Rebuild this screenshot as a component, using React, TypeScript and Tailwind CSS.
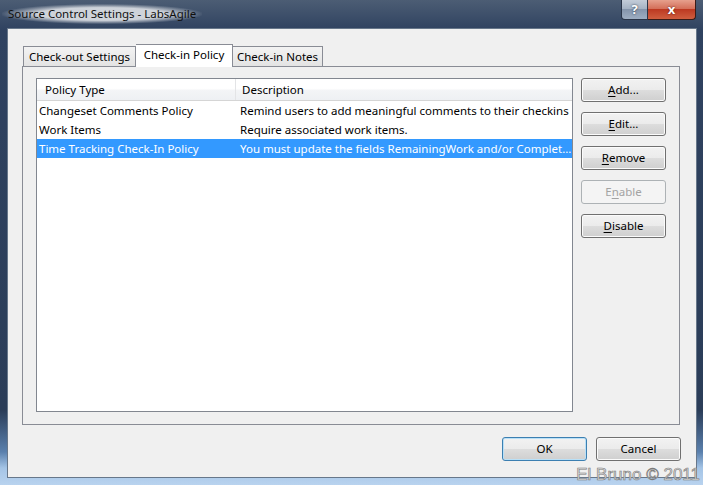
import React from "react";

const U = ({ c }: { c: string }) => <span className="underline underline-offset-2">{c}</span>;

function Btn({ children, kind = "normal" }: { children: React.ReactNode; kind?: "normal" | "default" | "disabled" }) {
  const base = "w-[85px] h-[24px] rounded-[3px] border flex items-center justify-center text-[11.5px] leading-none";
  const cls =
    kind === "disabled"
      ? "border-[#adb2b5] bg-[#f4f4f4] text-[#a3a3a3]"
      : kind === "default"
      ? "border-[#3c7fb1] text-black bg-[linear-gradient(to_bottom,#f2f2f2_0%,#ebebeb_50%,#dddddd_50%,#cfcfcf_100%)] shadow-[inset_0_0_0_1px_#b9e0f7]"
      : "border-[#707070] text-black bg-[linear-gradient(to_bottom,#f2f2f2_0%,#ebebeb_50%,#dddddd_50%,#cfcfcf_100%)] shadow-[inset_0_0_0_1px_#fbfbfb]";
  return <div className={`${base} ${cls}`}>{children}</div>;
}

const rows = [
  ["Changeset Comments Policy", "Remind users to add meaningful comments to their checkins"],
  ["Work Items", "Require associated work items."],
  ["Time Tracking Check-In Policy", "You must update the fields RemainingWork and/or Complet..."],
];

export default function App() {
  return (
    <div className="relative w-[703px] h-[485px] overflow-hidden font-['Noto_Sans',sans-serif] text-[11.5px] text-black bg-[linear-gradient(to_bottom,#4c5d74_0px,#2f4260_30px,#2b3d58_410px,#5a80ad_452px,#a4c4e6_468px,#b9d3ef_485px)]">
      {/* title bar */}
      <div className="h-[28px] flex items-start justify-between">
        <div className="h-full flex items-center pl-[2px]">
          <span className="px-[6px] py-[4px] leading-none text-[#101010] bg-[radial-gradient(ellipse_at_center,rgba(214,218,224,0.95)_45%,rgba(214,218,224,0)_72%)]">
            Source Control Settings - LabsAgile
          </span>
        </div>
        <div className="flex mr-[7px]">
          <div className="w-[27px] h-[20px] border border-[#2a3548] border-t-0 rounded-bl-[4px] bg-[linear-gradient(to_bottom,#c3ccd8_0%,#a6b3c4_45%,#8595ab_50%,#9eaec2_100%)] flex items-center justify-center text-white font-bold text-[13px] leading-none [text-shadow:0_0_2px_#1b2636]">
            ?
          </div>
          <div className="w-[48px] h-[20px] border border-[#3b1c17] border-t-0 border-l-0 rounded-br-[4px] bg-[linear-gradient(to_bottom,#e6a08d_0%,#d4705a_45%,#bd3a22_50%,#d05e3f_100%)] flex items-center justify-center text-white font-bold text-[13px] leading-none [text-shadow:0_0_2px_#4a1208]">
            x
          </div>
        </div>
      </div>

      {/* client area */}
      <div className="ml-[7px] w-[690px] h-[450px] border border-[#67778a] bg-[#f0f0f0] pt-[15px]">
        {/* tabs */}
        <div className="relative z-10 flex items-end h-[22px] ml-[15px]">
          <div className="h-[20px] w-[113px] border border-b-0 border-[#898c95] bg-[linear-gradient(to_bottom,#f3f3f3,#e3e3e3)] flex items-center justify-center">
            Check-out Settings
          </div>
          <div className="h-[23px] -mb-[1px] w-[97px] border border-b-0 border-l-0 border-[#898c95] bg-white flex items-center justify-center pb-[3px]">
            Check-in Policy
          </div>
          <div className="h-[20px] w-[90px] border border-b-0 border-l-0 border-[#898c95] bg-[linear-gradient(to_bottom,#f3f3f3,#e3e3e3)] flex items-center justify-center">
            Check-in Notes
          </div>
        </div>

        {/* panel */}
        <div className="ml-[14px] w-[658px] h-[359px] border border-[#898c95] bg-[#f0f0f0] pt-[11px] pl-[13px] flex gap-[8px]">
          {/* list view */}
          <div className="w-[537px] h-[334px] border border-[#828790] bg-white flex flex-col">
            <div className="h-[22px] flex bg-[linear-gradient(to_bottom,#ffffff_0%,#ffffff_45%,#f3f4f6_55%,#eef0f3_100%)] border-b border-[#d5d5d5]">
              <div className="w-[199px] shrink-0 border-r border-[#e3e4e6] pl-[8px] flex items-center">Policy Type</div>
              <div className="flex-1 pl-[6px] flex items-center">Description</div>
            </div>
            {rows.map((r, i) => (
              <div key={i} className={`h-[19px] flex items-center ${i === 2 ? "bg-[#3399ff] text-white" : ""}`}>
                <div className="w-[200px] shrink-0 pl-[2px] whitespace-nowrap">{r[0]}</div>
                <div className="pl-[3px] whitespace-nowrap">{r[1]}</div>
              </div>
            ))}
          </div>
          {/* side buttons */}
          <div className="flex flex-col gap-[10px]">
            <Btn><U c="A" />dd...</Btn>
            <Btn><U c="E" />dit...</Btn>
            <Btn><U c="R" />emove</Btn>
            <Btn kind="disabled">E<U c="n" />able</Btn>
            <Btn><U c="D" />isable</Btn>
          </div>
        </div>

        {/* bottom buttons */}
        <div className="mt-[12px] ml-[494px] flex gap-[9px]">
          <Btn kind="default">OK</Btn>
          <Btn>Cancel</Btn>
        </div>
      </div>

      {/* watermark */}
      <div className="absolute right-[3px] bottom-[2px] font-['Liberation_Sans',sans-serif] text-[17px] leading-none text-[#dcdcdc] [-webkit-text-stroke:0.6px_#7a7a7a]">
        El Bruno © 2011
      </div>
    </div>
  );
}
